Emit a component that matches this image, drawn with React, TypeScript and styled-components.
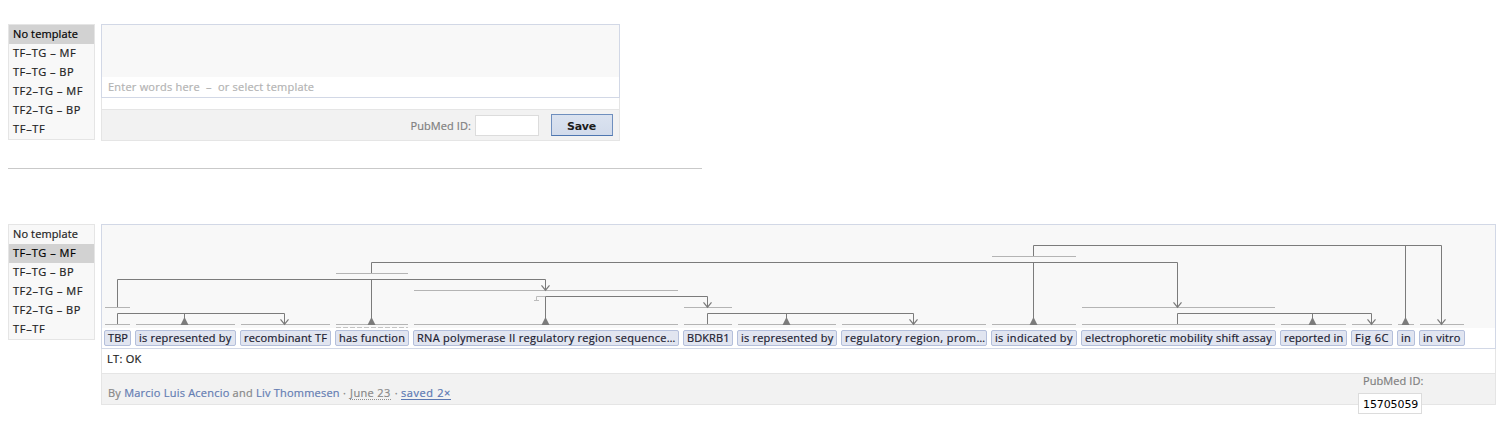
import React from "react";
import styled, { createGlobalStyle } from "styled-components";

const GlobalStyle = createGlobalStyle`
  * { box-sizing: border-box; }
  body {
    margin: 0;
    background: #fff;
    color: #222;
    font: 11px/19px "Open Sans", "Noto Sans", sans-serif;
    -webkit-text-stroke: 0.2px;
  }
`;

const Page = styled.main`
  width: 1508px;
  height: 423px;
  padding: 24px 0 0 8px;
  overflow: hidden;
`;

const Entry = styled.section`
  display: flex;
  align-items: flex-start;
  gap: 6px;
`;

const Divider = styled.hr`
  width: 694px;
  height: 1px;
  margin: 27px 0 55px;
  border: 0;
  background: #c9c9c9;
`;

const TemplateList = styled.ul`
  width: 87px;
  flex: none;
  margin: 0;
  padding: 0;
  list-style: none;
  background: #f8f8f8;
  border: 1px solid #e5e5e5;
`;

const TemplateItem = styled.li<{ $selected: boolean; $spacing: number }>`
  height: 19px;
  padding-left: 4px;
  white-space: pre;
  line-height: 18px;
  letter-spacing: ${(p) => p.$spacing}px;
  background: ${(p) => (p.$selected ? "#d2d2d2" : "transparent")};
  color: ${(p) => (p.$selected ? "#000" : "#222")};
`;

const Panel = styled.div<{ $width: number }>`
  width: ${(p) => p.$width}px;
  flex: none;
`;

const Editor = styled.div`
  border: 1px solid #d2d8e6;
  background: #fff;
`;

const Canvas = styled.div<{ $height: number }>`
  height: ${(p) => p.$height}px;
  background: #f8f8f8;
`;

const Placeholder = styled.div`
  height: 20px;
  padding-left: 6px;
  color: #b3b3b3;
  white-space: pre;
  letter-spacing: 0.22px;
`;

const TokenRow = styled.div`
  display: flex;
  gap: 4px;
  height: 20px;
  padding: 2px 0 0 2px;
`;

const Token = styled.span<{ $width: number; $spacing: number }>`
  width: ${(p) => p.$width}px;
  height: 16px;
  flex: none;
  padding-left: 3px;
  border: 1px solid #b4bfdb;
  border-radius: 2px;
  background: #e1e5f0;
  color: #1c1c30;
  line-height: 14px;
  white-space: pre;
  letter-spacing: ${(p) => p.$spacing}px;
`;

const Status = styled.div<{ $height: number }>`
  height: ${(p) => p.$height}px;
  padding: 0 5px;
  border: solid #e5e5e5;
  border-width: 0 1px;
  letter-spacing: 0.3px;
`;

const Footer = styled.footer<{ $end?: boolean }>`
  display: flex;
  height: 32px;
  justify-content: ${(p) => (p.$end ? "flex-end" : "space-between")};
  padding: ${(p) => (p.$end ? "4px 6px 0" : "0 73px 0 6px")};
  background: #f2f2f2;
  border: 1px solid #e5e5e5;
`;

const FieldLabel = styled.label`
  padding-top: 2px;
  margin-right: 4px;
  color: #7f7f7f;
  letter-spacing: 0.08px;
`;

const Field = styled.input`
  width: 64px;
  height: 21px;
  padding: 2px 0 0 4px;
  border: 1px solid #dcdcdc;
  background: #fff;
  color: #000;
  font: 11px "DejaVu Sans", sans-serif;
  letter-spacing: -0.1px;
  -webkit-text-stroke: 0;
  outline: 0;
`;

const SaveField = styled(Field)`
  margin: 1px 12px 0 0;
`;

const SaveButton = styled.button`
  width: 62px;
  height: 22px;
  padding: 2px 1px 0 0;
  border: 1px solid #6f8fbe;
  border-bottom-color: #4e76b0;
  background: linear-gradient(#dbe3f0, #d2dbeb);
  color: #1c1c1c;
  font: bold 11px "DejaVu Sans", sans-serif;
  letter-spacing: -0.3px;
  -webkit-text-stroke: 0;
`;

const StackedField = styled.div`
  display: flex;
  flex-direction: column;
  width: 64px;
  height: 30px;
  overflow: visible;
`;

const StackedLabel = styled.label`
  height: 19px;
  flex: none;
  padding-left: 5px;
  line-height: 13px;
  color: #7f7f7f;
  letter-spacing: 0.08px;
  white-space: nowrap;
`;

const StackedInput = styled(Field)`
  flex: none;
`;

const Credits = styled.div`
  padding-top: 9px;
  color: #888;
  white-space: pre;
  letter-spacing: 0.22px;
`;

const Author = styled.span`
  color: #647db3;
`;

const DateText = styled.span`
  display: inline-block;
  height: 14px;
  margin: 0 1px;
  line-height: 14px;
  letter-spacing: 0.36px;
  border-bottom: 1px dotted #8e8e8e;
`;

const SavedLink = styled.a`
  display: inline-block;
  height: 14px;
  line-height: 14px;
  color: #5b78b3;
  letter-spacing: 0.6px;
  border-bottom: 1px solid #5b78b3;
`;

const templates = [
  { label: "No template", spacing: 0.12 },
  { label: "TF–TG – MF", spacing: 0.5 },
  { label: "TF–TG – BP", spacing: 0.48 },
  { label: "TF2–TG – MF", spacing: 0.5 },
  { label: "TF2–TG – BP", spacing: 0.48 },
  { label: "TF–TF", spacing: 0.7 },
];

const tokens = [
  { text: "TBP", width: 27, spacing: 0.1 },
  { text: "is represented by", width: 101, spacing: 0.2 },
  { text: "recombinant TF", width: 91, spacing: 0.2 },
  { text: "has function", width: 74, spacing: 0.22 },
  { text: "RNA polymerase II regulatory region sequence…", width: 266, spacing: 0.28 },
  { text: "BDKRB1", width: 50, spacing: 0.1 },
  { text: "is represented by", width: 100, spacing: 0.2 },
  { text: "regulatory region, prom…", width: 146, spacing: 0.4 },
  { text: "is indicated by", width: 86, spacing: 0.3 },
  { text: "electrophoretic mobility shift assay", width: 195, spacing: 0.23 },
  { text: "reported in", width: 67, spacing: 0.15 },
  { text: "Fig 6C", width: 42, spacing: 0.6 },
  { text: "in", width: 18, spacing: 0.2 },
  { text: "in vitro", width: 46, spacing: 0.25 },
];

// Horizontal bars: [left, right, y]
const bars = [
  [3, 28, 82], [3, 28, 99], [34, 133, 99], [139, 228, 99],
  [234, 306, 48], [234, 306, 99], [312, 576, 65], [312, 576, 99],
  [582, 630, 82], [582, 630, 99], [636, 734, 99], [740, 884, 99],
  [890, 974, 31], [890, 974, 99], [980, 1173, 82], [980, 1173, 99],
  [1179, 1244, 99], [1250, 1290, 99], [1296, 1312, 99], [1318, 1362, 99],
];

const links = [
  "M15.5 82V54.5H443.5V65",
  "M15.5 99V88.5H182.5V99M82.5 88V95",
  "M269.5 48V37.5H1075.5V82M269.5 54V95M931.5 37V95",
  "M443.5 95V71.5H605.5V82",
  "M605.5 99V88.5H811.5V99M684.5 88V95",
  "M931.5 31V20.5H1339.5V99M1303.5 20V95",
  "M1075.5 99V88.5H1269.5V99M1210.5 88V95",
];

const arrows = [[182, 99], [443, 65], [605, 82], [811, 99], [1075, 82], [1269, 99], [1339, 99]];
const triangles = [82, 269, 443, 684, 931, 1210, 1303];

function TemplateMenu({ selected }: { selected: number }) {
  return (
    <TemplateList>
      {templates.map((t, i) => (
        <TemplateItem key={t.label} $selected={i === selected} $spacing={t.spacing}>
          {t.label}
        </TemplateItem>
      ))}
    </TemplateList>
  );
}

function ConnectorDiagram() {
  return (
    <svg width="1393" height="103" fill="none" display="block">
      <g stroke="#b4b4b4">
        {bars.map(([x1, x2, y]) => (
          <path key={`${x1}-${y}`} d={`M${x1} ${y + 0.5}H${x2}`} />
        ))}
        <path d="M443 71.5H434.5V75M432 75.5H437" stroke="#bcbcbc" />
        <path d="M234 102.5H306" strokeDasharray="5 2" stroke="#c4c4c4" />
      </g>
      <g stroke="#7b7b7b">
        {links.map((d) => (
          <path key={d} d={d} />
        ))}
        {arrows.map(([x, y]) => (
          <path
            key={x}
            strokeWidth="1.2"
            d={`M${x - 3.5} ${y - 4.7}L${x + 0.5} ${y + 0.2}L${x + 4.5} ${y - 4.7}`}
          />
        ))}
      </g>
      <g fill="#7b7b7b">
        {triangles.map((x) => (
          <path key={x} d={`M${x} 93H${x + 1}L${x + 4.5} 100H${x - 3.5}Z`} />
        ))}
      </g>
    </svg>
  );
}

export default function App() {
  return (
    <>
      <GlobalStyle />
      <Page>
        <Entry>
          <TemplateMenu selected={0} />
          <Panel $width={519}>
            <Editor>
              <Canvas $height={52} />
              <Placeholder>{"Enter words here  –  or select template"}</Placeholder>
            </Editor>
            <Status $height={11} />
            <Footer $end>
              <FieldLabel htmlFor="new-pubmed">PubMed ID:</FieldLabel>
              <SaveField id="new-pubmed" />
              <SaveButton>Save</SaveButton>
            </Footer>
          </Panel>
        </Entry>
        <Divider />
        <Entry>
          <TemplateMenu selected={1} />
          <Panel $width={1395}>
            <Editor>
              <Canvas $height={103}>
                <ConnectorDiagram />
              </Canvas>
              <TokenRow>
                {tokens.map((t, i) => (
                  <Token key={i} $width={t.width} $spacing={t.spacing}>
                    {t.text}
                  </Token>
                ))}
              </TokenRow>
            </Editor>
            <Status $height={24}>LT: OK</Status>
            <Footer>
              <Credits>
                By <Author>Marcio Luis Acencio</Author> and <Author>Liv Thommesen</Author> ·{" "}
                <DateText>June 23</DateText> · <SavedLink>saved 2×</SavedLink>
              </Credits>
              <StackedField>
                <StackedLabel htmlFor="saved-pubmed">PubMed ID:</StackedLabel>
                <StackedInput id="saved-pubmed" defaultValue="15705059" />
              </StackedField>
            </Footer>
          </Panel>
        </Entry>
      </Page>
    </>
  );
}
